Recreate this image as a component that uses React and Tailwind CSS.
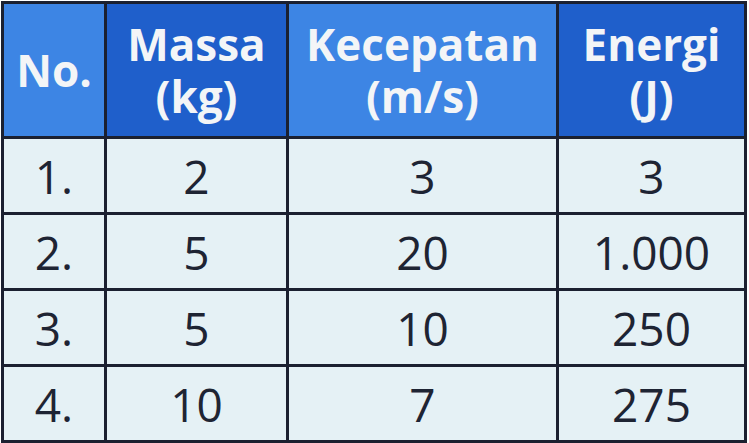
const headers = [
  { lines: ['No.'], tone: 'light' },
  { lines: ['Massa', '(kg)'], tone: 'dark' },
  { lines: ['Kecepatan', '(m/s)'], tone: 'light' },
  { lines: ['Energi', '(J)'], tone: 'dark' },
];

const rows = [
  ['1.', '2', '3', '3'],
  ['2.', '5', '20', '1.000'],
  ['3.', '5', '10', '250'],
  ['4.', '10', '7', '275'],
];

export default function App() {
  return (
    <div className="w-[749px] h-[443px] bg-white overflow-hidden" style={{ fontFamily: '"Open Sans", "Noto Sans", sans-serif' }}>
      <div className="ml-[1px] mt-[1px] inline-grid grid-cols-[100px_179px_267px_185px] grid-rows-[132px_73px_73px_73px_73px] gap-[3px] p-[3px] bg-[#1b2030]">
        {headers.map((h, i) => (
          <div
            key={i}
            className={`flex flex-col items-center justify-center text-[44px] leading-[52px] font-bold text-[#f3f5f7] ${
              h.tone === 'light' ? 'bg-[#3d85e4]' : 'bg-[#1f5fcb]'
            }`}
          >
            {h.lines.map((l) => (
              <span key={l}>{l}</span>
            ))}
          </div>
        ))}
        {rows.map((r, ri) =>
          r.map((c, ci) => (
            <div
              key={`${ri}-${ci}`}
              className="flex items-center justify-center bg-[#e5f1f5] text-[46px] leading-none text-[#1e2433]"
            >
              {c}
            </div>
          ))
        )}
      </div>
    </div>
  );
}
